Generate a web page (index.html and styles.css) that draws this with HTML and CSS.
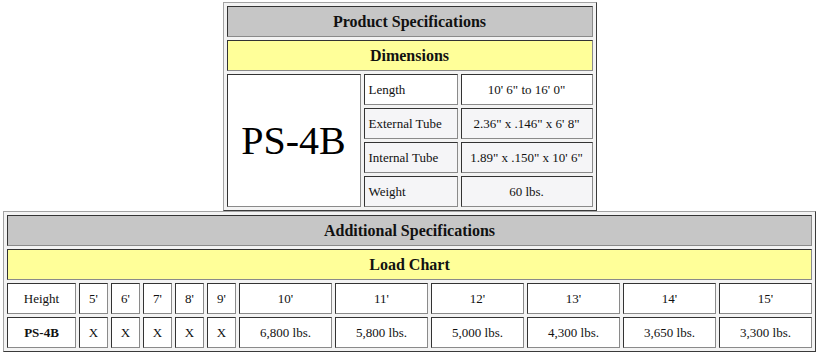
FILE: index.html
```html
<!DOCTYPE html>
<html>
<head>
<meta charset="utf-8">
<link rel="stylesheet" href="styles.css">
</head>
<body>
<div class="page">
  <table class="spec spec-product">
    <colgroup>
      <col class="c-model">
      <col class="c-label">
      <col class="c-value">
    </colgroup>
    <tr><td colspan="3" class="head-gray">Product Specifications</td></tr>
    <tr><td colspan="3" class="head-yellow">Dimensions</td></tr>
    <tr>
      <td rowspan="4" class="model">PS-4B</td>
      <td class="label">Length</td>
      <td class="value">10' 6" to 16' 0"</td>
    </tr>
    <tr class="alt">
      <td class="label">External Tube</td>
      <td class="value">2.36" x .146" x 6' 8"</td>
    </tr>
    <tr class="alt">
      <td class="label">Internal Tube</td>
      <td class="value">1.89" x .150" x 10' 6"</td>
    </tr>
    <tr class="alt">
      <td class="label">Weight</td>
      <td class="value">60 lbs.</td>
    </tr>
  </table>

  <table class="spec spec-load">
    <colgroup>
      <col class="c-first">
      <col class="c-small"><col class="c-small"><col class="c-small"><col class="c-small"><col class="c-small">
      <col class="c-wide"><col class="c-wide"><col class="c-wide"><col class="c-wide"><col class="c-wide"><col class="c-wide">
    </colgroup>
    <tr><td colspan="12" class="head-gray">Additional Specifications</td></tr>
    <tr><td colspan="12" class="head-yellow">Load Chart</td></tr>
    <tr class="center">
      <td>Height</td>
      <td>5'</td><td>6'</td><td>7'</td><td>8'</td><td>9'</td>
      <td>10'</td><td>11'</td><td>12'</td><td>13'</td><td>14'</td><td>15'</td>
    </tr>
    <tr class="center">
      <td class="bold">PS-4B</td>
      <td>X</td><td>X</td><td>X</td><td>X</td><td>X</td>
      <td>6,800 lbs.</td><td>5,800 lbs.</td><td>5,000 lbs.</td><td>4,300 lbs.</td><td>3,650 lbs.</td><td>3,300 lbs.</td>
    </tr>
  </table>
</div>
</body>
</html>
```

FILE: styles.css
```css
html, body {
  margin: 0;
  padding: 0;
  background: #ffffff;
}

body {
  font-family: "Liberation Serif", "Times New Roman", serif;
  color: #111111;
}

.page {
  width: 813px;
  padding: 2px 0 0 3px;
}

.spec {
  border-collapse: separate;
  border-spacing: 3px;
  table-layout: fixed;
  background: #f3f3f3;
  border: 1px solid;
  border-color: #a3a3a3 #3a3a3a #3a3a3a #a3a3a3;
}

.spec td {
  border: 1px solid;
  border-color: #333333 #8a8a8a #8a8a8a #333333;
  background: #ffffff;
  height: 29px;
  padding: 0 4px;
  font-size: 13px;
  line-height: 15px;
  vertical-align: middle;
  white-space: nowrap;
  box-sizing: content-box;
}

.spec-product {
  width: 374px;
  margin: 0 auto;
}

.c-model { width: 134px; }
.c-label { width: 94px; }
.c-value { width: 132px; }

.spec-load {
  width: 813px;
}

.c-first { width: 69px; }
.c-small { width: 29px; }
.c-wide { width: 93px; }

.spec td.head-gray {
  background: #c6c6c6;
  font-weight: bold;
  font-size: 16px;
  text-align: center;
}

.spec td.head-yellow {
  background: #ffff99;
  font-weight: bold;
  font-size: 16px;
  text-align: center;
}

.spec td.model {
  font-size: 40px;
  line-height: 44px;
  text-align: center;
  color: #000000;
}

.spec td.label {
  text-align: left;
}

.spec td.value {
  text-align: center;
}

.spec tr.alt td {
  background: #f5f5f7;
}

.spec tr.center td {
  text-align: center;
  padding: 0;
}

.spec td.bold {
  font-weight: bold;
}
```
